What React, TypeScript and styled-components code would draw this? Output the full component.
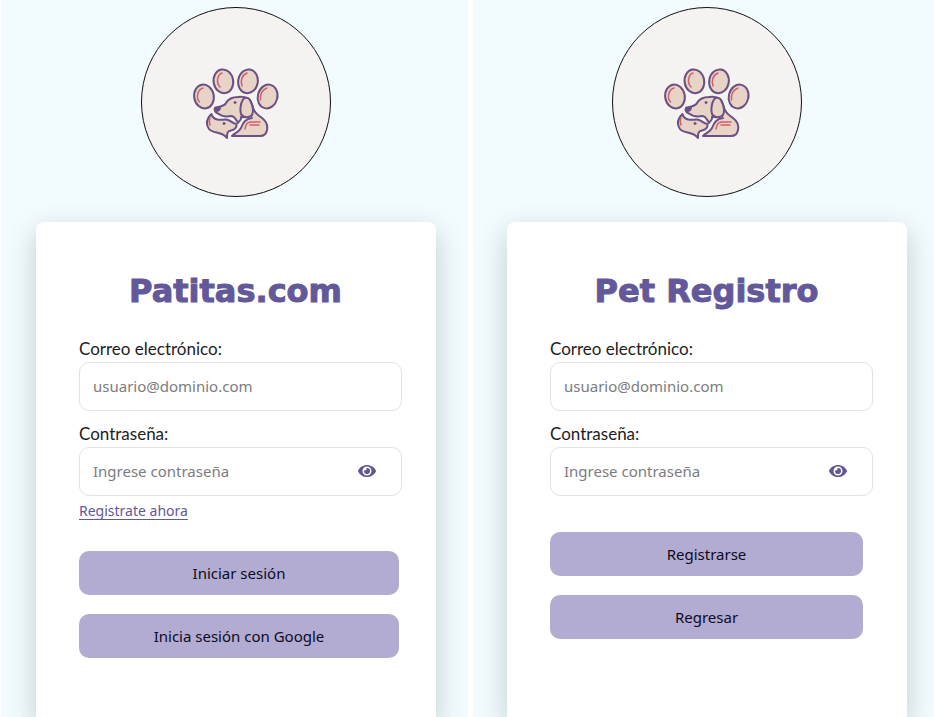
import React, { useId, useState } from "react";
import styled, { createGlobalStyle } from "styled-components";
import { FaEye } from "react-icons/fa";

const GlobalStyle = createGlobalStyle`
  *, *::before, *::after { box-sizing: border-box; }
  body {
    margin: 0;
    background: #fff;
    color: #1d1d1f;
    font-family: "Noto Sans", sans-serif;
    font-size: 15px;
  }
  #root { overflow: hidden; }
`;

const Page = styled.main`
  display: grid;
  grid-template-columns: 1fr 1fr;
  gap: 5px;
  min-height: 100vh;
  padding-left: 2px;
  margin-right: -5px;
`;

const Screen = styled.section`
  display: flex;
  flex-direction: column;
  align-items: center;
  gap: 25px;
  padding: 7px 23px 0 25px;
  background: #f2fbfe;
  overflow: hidden;
`;

const LogoFrame = styled.div`
  display: flex;
  align-items: center;
  justify-content: center;
  width: 190px;
  height: 190px;
  border: 1px solid #111;
  border-radius: 50%;
  background: #f5f3f2;
`;

const Card = styled.form`
  display: flex;
  flex-direction: column;
  flex: 1;
  width: 100%;
  max-width: 400px;
  padding: 46px 34px 60px 43px;
  border-radius: 8px 8px 0 0;
  background: #fff;
  box-shadow: 0 10px 28px rgba(50, 60, 65, 0.25);
`;

const Title = styled.h1`
  margin: 0 10px 23px 0;
  color: #62589a;
  font-family: "DejaVu Sans", sans-serif;
  font-size: 32px;
  font-weight: 700;
  line-height: 46px;
  text-align: center;
  -webkit-text-stroke: 1px #62589a;
`;

const Label = styled.label`
  font-family: Lato, sans-serif;
  font-size: 17px;
  line-height: 24px;
`;

const Field = styled.div`
  display: flex;
  align-items: center;
  height: 49px;
  margin-top: 1px;
  border: 1px solid #e2e2e4;
  border-radius: 10px;

  & + ${Label} { margin-top: 11px; }
`;

const TextInput = styled.input`
  flex: 1;
  min-width: 0;
  height: 100%;
  padding: 0 13px 2px;
  border: 0;
  outline: 0;
  background: transparent;
  font: inherit;

  &::placeholder { color: #7c7c80; opacity: 1; }
`;

const EyeButton = styled.button`
  display: flex;
  margin-right: 25px;
  padding: 0 0 1px;
  border: 0;
  background: none;
  color: #5f5895;
  font-size: 18px;
  cursor: pointer;
`;

const RegisterLink = styled.a`
  align-self: flex-start;
  margin-top: 5px;
  color: #62589a;
  font-size: 14px;
  line-height: 20px;
  text-underline-offset: 3px;
`;

const Actions = styled.div<{ $inset: number; $top: number }>`
  display: flex;
  flex-direction: column;
  gap: 19px;
  margin: ${(p) => p.$top}px ${(p) => p.$inset}px 0 0;
`;

const ActionButton = styled.button`
  height: 44px;
  padding: 0 12px;
  border: 0;
  border-radius: 10px;
  background: #b2abd2;
  color: #0d0b1c;
  font: inherit;
  cursor: pointer;
`;

function PawLogo() {
  return (
    <svg
      width="90"
      height="74"
      viewBox="0 0 90 74"
      fill="#e8d3c7"
      stroke="#6b5083"
      strokeWidth="2"
      strokeLinejoin="round"
      strokeLinecap="round"
      aria-hidden="true"
    >
      <ellipse cx="13" cy="31.5" rx="9.8" ry="12" transform="rotate(-10 13 31.5)" />
      <ellipse cx="32.4" cy="16.3" rx="9.8" ry="11.9" transform="rotate(-10 32.4 16.3)" />
      <ellipse cx="57" cy="16.3" rx="9.8" ry="11.9" transform="rotate(10 57 16.3)" />
      <ellipse cx="76.6" cy="31.5" rx="9.8" ry="12" transform="rotate(14 76.6 31.5)" />
      <path d="M61 40 C63 48 67 50 71 53 C75 56 77 60 76 65 Q75 71 69 71 H41 C44 68 48 67 50 63 C52 58 54 54 61 53" />
      <path d="M24 43 C28 41 33 42 35 38 C38 33 42 32 47 32 C54 31 60 33 61.500 41 L60 51 C55 53 52 52 50 52 C51 56 48 55 47 58 C45 55 44 51 40 51 C35 52 30 51 26 48 C24 47 23 45 24 43 Z" />
      <path d="M52 34.500 C49 39 49 46 50 49 C52 53 58 53 61 50 C63 46 61 39 59 35 C57 32 54 32 52 34.500 Z" />
      <path d="M20.500 49 C15.500 54 14.500 59 18 64 C22 69 31 66 36 73 C36 69 36 66 40 65.500 C44 65 46 62 45.500 59 C42 59 40 55 35 54.500 C30 55 22 56 20.500 49 Z" />
      <path d="M24 43 L29 42 C29 45 27 46 25 46 Z" fill="#6b5083" />
      <circle cx="44" cy="37.500" r="1" fill="#6b5083" strokeWidth="1" />
      <circle cx="33" cy="58.500" r="1" fill="#6b5083" strokeWidth="1" />
      <g fill="none" stroke="#d0606c" strokeWidth="1.500">
        <path d="M12 23 C6 25 5 33 8.500 37" />
        <path d="M31 8 C26 10 25 18 29 22" />
        <path d="M56 8 C51 10 49 16 51 21" />
        <path d="M76 23 C71 25 69 30 69.500 35" />
        <path d="M54 64 C55 58 57 57 61 57 H69 M59 60 H68" />
        <path d="M19 53 Q17.500 56 19 60" />
      </g>
    </svg>
  );
}

interface AccessScreenProps {
  title: string;
  actions: string[];
  inset: number;
  top: number;
  registerLink?: string;
}

function AccessScreen({ title, actions, inset, top, registerLink }: AccessScreenProps) {
  const id = useId();
  const [visible, setVisible] = useState(false);
  return (
    <Screen>
      <LogoFrame>
        <PawLogo />
      </LogoFrame>
      <Card onSubmit={(e) => e.preventDefault()}>
        <Title>{title}</Title>
        <Label htmlFor={`${id}-mail`}>Correo electrónico:</Label>
        <Field>
          <TextInput id={`${id}-mail`} type="email" placeholder="usuario@dominio.com" />
        </Field>
        <Label htmlFor={`${id}-pass`}>Contraseña:</Label>
        <Field>
          <TextInput
            id={`${id}-pass`}
            type={visible ? "text" : "password"}
            placeholder="Ingrese contraseña"
          />
          <EyeButton type="button" aria-label="Mostrar contraseña" onClick={() => setVisible(!visible)}>
            <FaEye />
          </EyeButton>
        </Field>
        {registerLink && <RegisterLink href="#registro">{registerLink}</RegisterLink>}
        <Actions $inset={inset} $top={top}>
          {actions.map((label) => (
            <ActionButton key={label} type="button">
              {label}
            </ActionButton>
          ))}
        </Actions>
      </Card>
    </Screen>
  );
}

export default function App() {
  return (
    <>
      <GlobalStyle />
      <Page>
        <AccessScreen
          title="Patitas.com"
          registerLink="Registrate ahora"
          actions={["Iniciar sesión", "Inicia sesión con Google"]}
          inset={3}
          top={30}
        />
        <AccessScreen title="Pet Registro" actions={["Registrarse", "Regresar"]} inset={10} top={36} />
      </Page>
    </>
  );
}
